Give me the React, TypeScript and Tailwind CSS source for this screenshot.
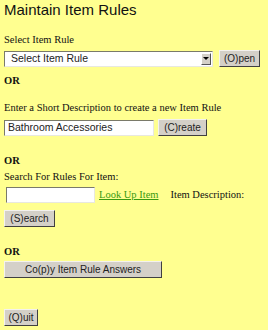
import React from "react";

const serif = { fontFamily: '"Liberation Serif", serif' };

function Btn({ children, w }: { children: React.ReactNode; w: string }) {
  return (
    <div
      className={`${w} h-[17px] bg-[#d4d0c8] border border-t-[#f4f2ee] border-l-[#f4f2ee] border-r-[#404040] border-b-[#404040] flex items-center justify-center text-[10px] text-[#222] font-['Liberation_Sans',sans-serif] leading-none`}
    >
      {children}
    </div>
  );
}

function Field({ w, children }: { w: string; children?: React.ReactNode }) {
  return (
    <div
      className={`${w} h-[16px] bg-white border border-t-[#7a7a6a] border-l-[#7a7a6a] border-r-[#e8e8e0] border-b-[#e8e8e0] flex items-center pl-[3px] text-[10.5px] text-[#222] font-['Liberation_Sans',sans-serif] leading-none`}
    >
      {children}
    </div>
  );
}

export default function App() {
  return (
    <div className="w-[268px] h-[330px] bg-[#ffff90] pl-[4px] text-[#111] overflow-hidden">
      <div className="pt-[2px] h-[20px] text-[15px] leading-[16px] font-['Liberation_Sans',sans-serif] text-[#111]">
        Maintain Item Rules
      </div>
      <div style={serif} className="mt-[14px] text-[10.5px] leading-[12px]">
        Select Item Rule
      </div>
      <div className="mt-[4px] flex items-center gap-[6px]">
        <div className="w-[209px] h-[16px] bg-white border border-t-[#7a7a6a] border-l-[#7a7a6a] border-r-[#e8e8e0] border-b-[#e8e8e0] flex items-center justify-between pl-[6px] pr-[1px] text-[10.5px] text-[#222] font-['Liberation_Sans',sans-serif] leading-none">
          <span>Select Item Rule</span>
          <div className="w-[10px] h-[12px] bg-[#d4d0c8] border border-t-white border-l-white border-r-[#555] border-b-[#555] flex items-center justify-center">
            <svg width="6" height="4" viewBox="0 0 6 4"><path d="M0 0h6L3 3z" fill="#000" /></svg>
          </div>
        </div>
        <Btn w="w-[41px]">(O)pen</Btn>
      </div>
      <div style={serif} className="mt-[8px] text-[10.5px] leading-[12px] font-bold">
        OR
      </div>
      <div style={serif} className="mt-[15px] text-[10.5px] leading-[12px]">
        Enter a Short Description to create a new Item Rule
      </div>
      <div className="mt-[5px] flex items-center gap-[4px]">
        <Field w="w-[150px]">Bathroom Accessories</Field>
        <Btn w="w-[49px]">(C)reate</Btn>
      </div>
      <div style={serif} className="mt-[19px] text-[10.5px] leading-[12px] font-bold">
        OR
      </div>
      <div style={serif} className="mt-[4px] text-[10.5px] leading-[12px]">
        Search For Rules For Item:
      </div>
      <div className="mt-[4px] flex items-center pl-[2px]">
        <Field w="w-[89px]" />
        <span style={serif} className="ml-[4px] text-[10.5px] text-[#3a9a10] underline">
          Look Up Item
        </span>
        <span style={serif} className="ml-[12px] text-[10.5px]">
          Item Description:
        </span>
      </div>
      <div className="mt-[7px]">
        <Btn w="w-[51px]">(S)earch</Btn>
      </div>
      <div style={serif} className="mt-[19px] text-[10.5px] leading-[12px] font-bold">
        OR
      </div>
      <div className="mt-[3px]">
        <Btn w="w-[158px]">Co(p)y Item Rule Answers</Btn>
      </div>
      <div className="mt-[31px]">
        <Btn w="w-[34px]">(Q)uit</Btn>
      </div>
    </div>
  );
}
